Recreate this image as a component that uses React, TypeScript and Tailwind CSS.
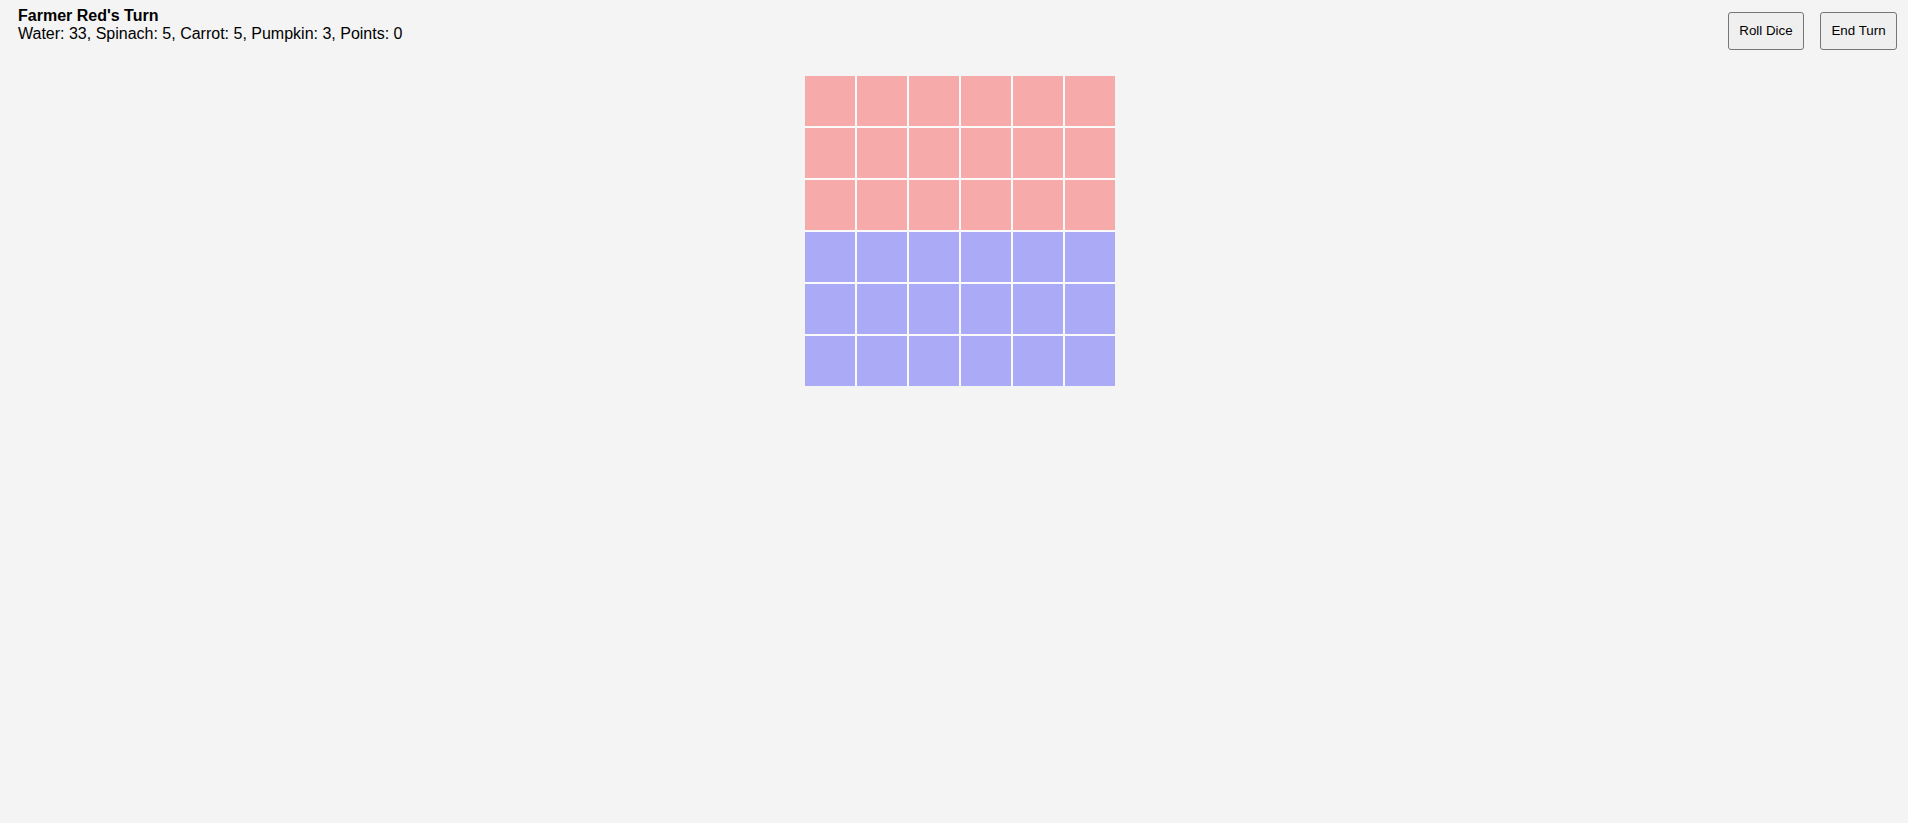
const ROWS = ["red", "red", "red", "blue", "blue", "blue"];

export default function App() {
  return (
    <div className="min-h-screen bg-[#f4f4f4] text-black font-['Liberation_Sans',Arial,sans-serif]">
      <div className="flex justify-between items-start pl-[18px] pr-[11px] pt-[7px]">
        <div className="text-[16px] leading-[18px]">
          <div className="font-bold">Farmer Red's Turn</div>
          <div>Water: 33, Spinach: 5, Carrot: 5, Pumpkin: 3, Points: 0</div>
        </div>
        <div className="flex gap-[16px] mt-[5px]">
          <button className="h-[38px] w-[76px] bg-[#efefef] border border-[#767676] rounded-[3px] text-[13.33px] text-black">
            Roll Dice
          </button>
          <button className="h-[38px] w-[77px] bg-[#efefef] border border-[#767676] rounded-[3px] text-[13.33px] text-black">
            End Turn
          </button>
        </div>
      </div>
      <div className="flex justify-center pl-[12px] mt-[26px]">
        <div className="grid grid-cols-6 gap-[2px] bg-[#fafafa]">
          {ROWS.map((c, r) =>
            [0, 1, 2, 3, 4, 5].map((i) => (
              <div
                key={r + "-" + i}
                className={
                  c === "red"
                    ? "w-[50px] h-[50px] bg-[#f7aaaa]"
                    : "w-[50px] h-[50px] bg-[#aaaaf6]"
                }
              />
            ))
          )}
        </div>
      </div>
    </div>
  );
}
